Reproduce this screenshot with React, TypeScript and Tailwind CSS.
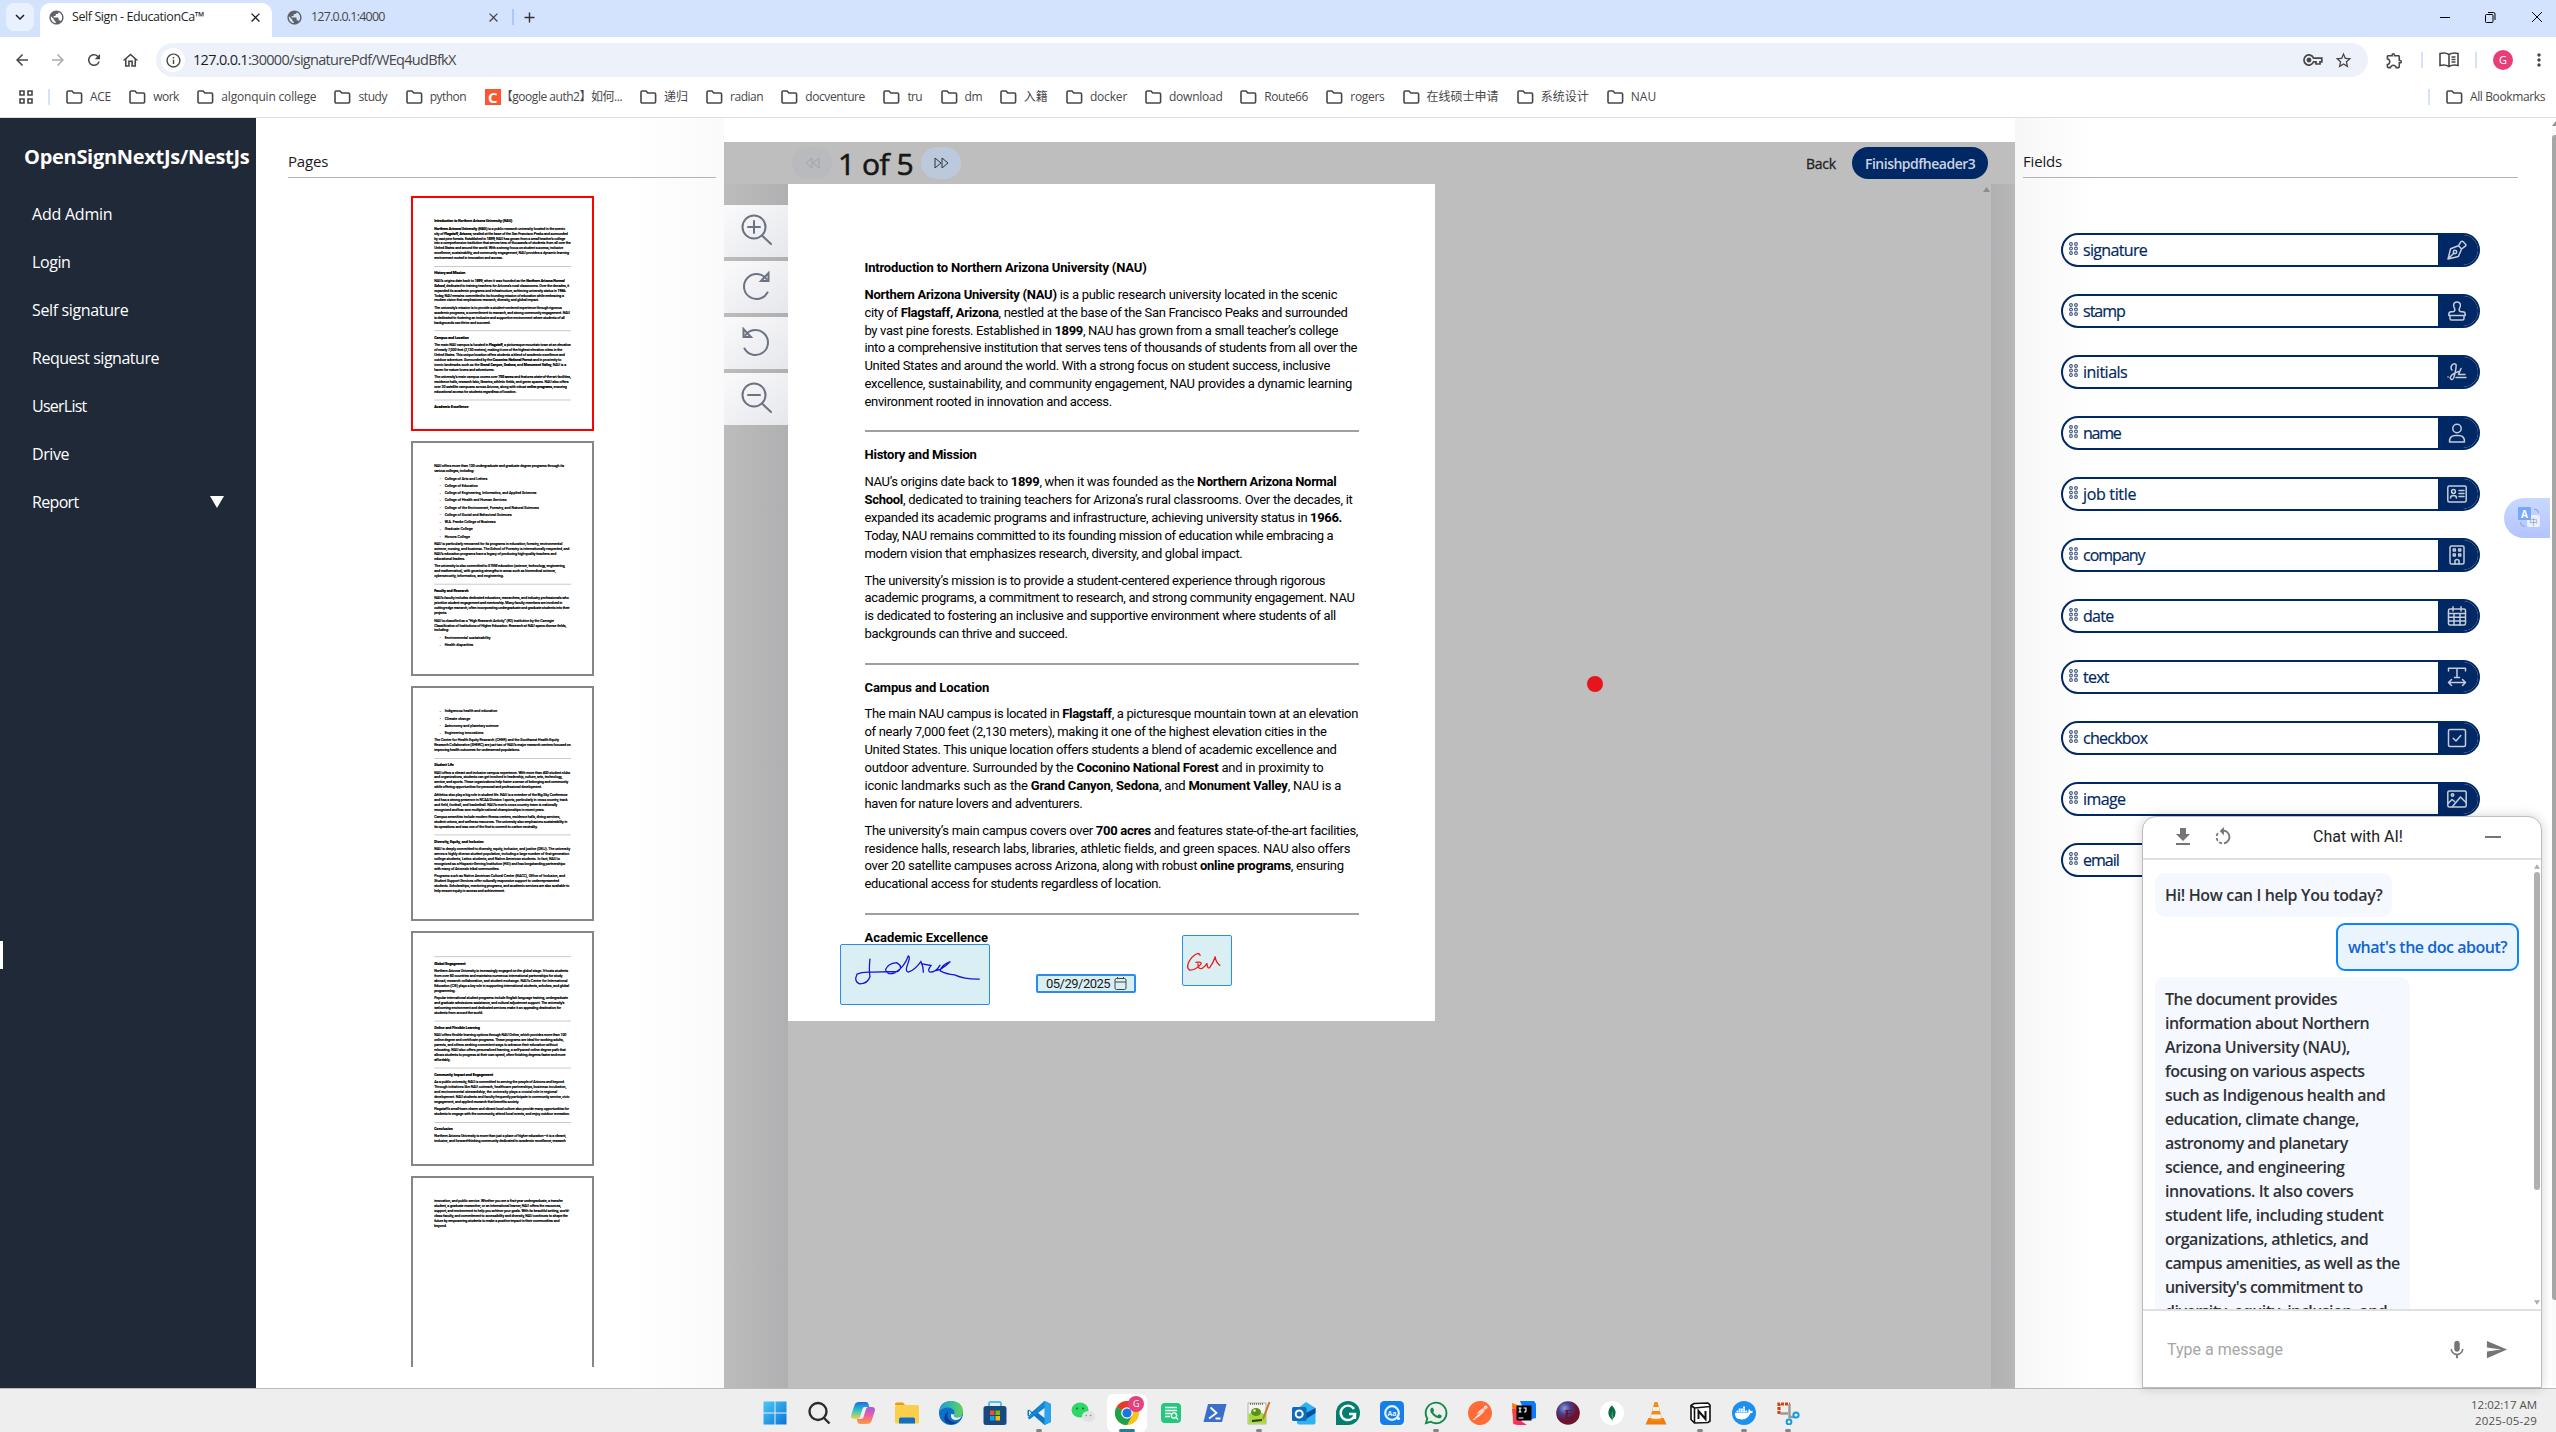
import { useLayoutEffect, useRef, type ReactNode } from "react";
import {
  MdArrowBack, MdArrowForward, MdRefresh, MdOutlineHome, MdInfoOutline, MdStarOutline,
  MdOutlineExtension, MdMoreVert, MdPublic, MdClose, MdAdd, MdKeyboardArrowDown,
  MdFileDownload, MdRotateLeft, MdMic, MdSend,
} from "react-icons/md";
import { SiPostman, SiMongodb, SiDocker } from "react-icons/si";
import { FaWhatsapp } from "react-icons/fa";

/* Single line of text whose tracking is adjusted so that it fills a given width. */
function Fit({ w, children, className = "" }: { w: number; children: ReactNode; className?: string }) {
  const ref = useRef<HTMLSpanElement>(null);
  useLayoutEffect(() => {
    const el = ref.current;
    if (!el) return;
    el.style.letterSpacing = "0px";
    const n = (el.textContent || "").length;
    if (n > 1) el.style.letterSpacing = `${(w - el.offsetWidth) / n}px`;
  }, [w]);
  return (
    <span className={`block shrink-0 whitespace-nowrap ${className}`} style={{ width: w }}>
      <span ref={ref} className="inline-block">{children}</span>
    </span>
  );
}

/* ---------- document content ---------- */
type Block = { k: "h" | "p" | "li"; l: [string, number][] } | { k: "hr" };
const HR: Block = { k: "hr" };
const h = (t: string, w: number): Block => ({ k: "h", l: [[t, w]] });
const li = (t: string, w: number): Block => ({ k: "li", l: [[t, w]] });
const p = (...l: [string, number][]): Block => ({ k: "p", l });

const PAGES: Block[][] = [
  [
    h("Introduction to Northern Arizona University (NAU)", 282.5),
    p(
      ["*Northern Arizona University (NAU)* is a public research university located in the scenic", 473],
      ["city of *Flagstaff, Arizona*, nestled at the base of the San Francisco Peaks and surrounded", 483],
      ["by vast pine forests. Established in *1899*, NAU has grown from a small teacher’s college", 473],
      ["into a comprehensive institution that serves tens of thousands of students from all over the", 493],
      ["United States and around the world. With a strong focus on student success, inclusive", 465.5],
      ["excellence, sustainability, and community engagement, NAU provides a dynamic learning", 487],
      ["environment rooted in innovation and access.", 247],
    ),
    HR,
    h("History and Mission", 112.5),
    p(
      ["NAU’s origins date back to *1899*, when it was founded as the *Northern Arizona Normal*", 472],
      ["*School*, dedicated to training teachers for Arizona’s rural classrooms. Over the decades, it", 488],
      ["expanded its academic programs and infrastructure, achieving university status in *1966.*", 478],
      ["Today, NAU remains committed to its founding mission of education while embracing a", 469],
      ["modern vision that emphasizes research, diversity, and global impact.", 378],
    ),
    p(
      ["The university’s mission is to provide a student-centered experience through rigorous", 460.5],
      ["academic programs, a commitment to research, and strong community engagement. NAU", 490],
      ["is dedicated to fostering an inclusive and supportive environment where students of all", 471],
      ["backgrounds can thrive and succeed.", 203.5],
    ),
    HR,
    h("Campus and Location", 125),
    p(
      ["The main NAU campus is located in *Flagstaff*, a picturesque mountain town at an elevation", 494],
      ["of nearly 7,000 feet (2,130 meters), making it one of the highest elevation cities in the", 461.5],
      ["United States. This unique location offers students a blend of academic excellence and", 472],
      ["outdoor adventure. Surrounded by the *Coconino National Forest* and in proximity to", 458.5],
      ["iconic landmarks such as the *Grand Canyon*, *Sedona*, and *Monument Valley*, NAU is a", 476.5],
      ["haven for nature lovers and adventurers.", 218],
    ),
    p(
      ["The university’s main campus covers over *700 acres* and features state-of-the-art facilities,", 493.5],
      ["residence halls, research labs, libraries, athletic fields, and green spaces. NAU also offers", 485.5],
      ["over 20 satellite campuses across Arizona, along with robust *online programs*, ensuring", 479],
      ["educational access for students regardless of location.", 296.5],
    ),
    HR,
    h("Academic Excellence", 123.5),
  ],
  [
    p(["NAU offers more than 130 undergraduate and graduate degree programs through its", 470], ["various colleges, including:", 144]),
    li("College of Arts and Letters", 154),
    li("College of Education", 119),
    li("College of Engineering, Informatics, and Applied Sciences", 332),
    li("College of Health and Human Services", 224),
    li("College of the Environment, Forestry, and Natural Sciences", 340),
    li("College of Social and Behavioral Sciences", 242),
    li("W.A. Franke College of Business", 184),
    li("Graduate College", 101),
    li("Honors College", 91),
    p(
      ["NAU is particularly renowned for its programs in education, forestry, environmental", 463],
      ["science, nursing, and business. The School of Forestry is internationally respected, and", 488],
      ["NAU’s education programs have a legacy of producing high-quality teachers and", 441],
      ["educational leaders.", 111],
    ),
    p(
      ["The university is also committed to STEM education (science, technology, engineering,", 473],
      ["and mathematics), with growing strengths in areas such as biomedical science,", 438],
      ["cybersecurity, informatics, and engineering.", 252],
    ),
    HR,
    h("Faculty and Research", 124),
    p(
      ["NAU’s faculty includes dedicated educators, researchers, and industry professionals who", 486],
      ["prioritize student engagement and mentorship. Many faculty members are involved in", 463],
      ["cutting-edge research, often incorporating undergraduate and graduate students into their", 489],
      ["projects.", 46],
    ),
    p(
      ["NAU is classified as a “High Research Activity” (R2) institution by the Carnegie", 433],
      ["Classification of Institutions of Higher Education. Research at NAU spans diverse fields,", 476],
      ["including:", 53],
    ),
    li("Environmental sustainability", 166),
    li("Health disparities", 103),
  ],
  [
    li("Indigenous health and education", 190),
    li("Climate change", 92),
    li("Astronomy and planetary science", 195),
    li("Engineering innovations", 140),
    p(
      ["The Center for Health Equity Research (CHER) and the Southwest Health Equity", 451],
      ["Research Collaborative (SHERC) are just two of NAU’s major research centers focused on", 494],
      ["improving health outcomes for underserved populations.", 310],
    ),
    HR,
    h("Student Life", 71),
    p(
      ["NAU offers a vibrant and inclusive campus experience. With more than 400 student clubs", 491],
      ["and organizations, students can get involved in leadership, culture, arts, technology,", 463],
      ["service, and sports. These organizations help foster a sense of belonging and community", 484],
      ["while offering opportunities for personal and professional development.", 389],
    ),
    p(
      ["Athletics also play a big role in student life. NAU is a member of the Big Sky Conference", 481],
      ["and has a strong presence in NCAA Division I sports, particularly in cross country, track", 482],
      ["and field, football, and basketball. NAU’s men’s cross country team is nationally", 445],
      ["recognized and has won multiple national championships in recent years.", 398],
    ),
    p(
      ["Campus amenities include modern fitness centers, residence halls, dining services,", 454],
      ["student unions, and wellness resources. The university also emphasizes sustainability in", 481],
      ["its operations and was one of the first to commit to carbon neutrality.", 373],
    ),
    HR,
    h("Diversity, Equity, and Inclusion", 179),
    p(
      ["NAU is deeply committed to diversity, equity, inclusion, and justice (DEIJ). The university", 491],
      ["serves a highly diverse student population, including a large number of first-generation", 487],
      ["college students, Latinx students, and Native American students. In fact, NAU is", 454],
      ["recognized as a Hispanic-Serving Institution (HSI) and has longstanding partnerships", 473],
      ["with many of Arizona’s tribal communities.", 236],
    ),
    p(
      ["Programs such as Native American Cultural Center (NACC), Office of Inclusion, and", 472],
      ["Student Support Services offer culturally responsive support to underrepresented", 451],
      ["students. Scholarships, mentoring programs, and academic services are also available to", 488],
      ["help ensure equity in access and achievement.", 255],
    ),
  ],
  [
    HR,
    h("Global Engagement", 113),
    p(
      ["Northern Arizona University is increasingly engaged on the global stage. It hosts students", 484],
      ["from over 80 countries and maintains numerous international partnerships for study", 463],
      ["abroad, research collaboration, and student exchange. NAU’s Center for International", 482],
      ["Education (CIE) plays a key role in supporting international students, scholars, and global", 488],
      ["programming.", 76],
    ),
    p(
      ["Popular international student programs include English language training, undergraduate", 483],
      ["and graduate admissions assistance, and cultural adjustment support. The university’s", 471],
      ["welcoming environment and dedicated services make it an appealing destination for", 458],
      ["students from around the world.", 176],
    ),
    HR,
    h("Online and Flexible Learning", 165),
    p(
      ["NAU offers flexible learning options through NAU Online, which provides more than 100", 477],
      ["online degree and certificate programs. These programs are ideal for working adults,", 467],
      ["parents, and others seeking convenient ways to advance their education without", 446],
      ["relocating. NAU also offers personalized learning, a self-paced online degree path that", 476],
      ["allows students to progress at their own speed, often finishing degrees faster and more", 473],
      ["affordably.", 59],
    ),
    HR,
    h("Community Impact and Engagement", 212),
    p(
      ["As a public university, NAU is committed to serving the people of Arizona and beyond.", 471],
      ["Through initiatives like NAU outreach, healthcare partnerships, business incubation,", 477],
      ["and environmental stewardship, the university plays a crucial role in regional", 445],
      ["development. NAU students and faculty frequently participate in community service, civic", 488],
      ["engagement, and applied research that benefits society.", 306],
    ),
    p(
      ["Flagstaff’s small-town charm and vibrant local culture also provide many opportunities for", 487],
      ["students to engage with the community, attend local events, and enjoy outdoor recreation.", 490],
    ),
    HR,
    h("Conclusion", 67),
    p(
      ["Northern Arizona University is more than just a place of higher education—it is a vibrant,", 476],
      ["inclusive, and forward-thinking community dedicated to academic excellence, research", 476],
    ),
  ],
  [
    p(
      ["innovation, and public service. Whether you are a first-year undergraduate, a transfer", 464],
      ["student, a graduate researcher, or an international learner, NAU offers the resources,", 458],
      ["support, and environment to help you achieve your goals. With its beautiful setting, world-", 488],
      ["class faculty, and commitment to accessibility and diversity, NAU continues to shape the", 482],
      ["future by empowering students to make a positive impact in their communities and", 452],
      ["beyond.", 46],
    ),
  ],
];

function rich(t: string) {
  return t.split("*").map((s, i) => (i % 2 ? <b key={i} className="font-bold">{s}</b> : s));
}

function DocPage({ blocks }: { blocks: Block[] }) {
  return (
    <div className="h-[837px] w-[647px] bg-white pl-[76.500px] pt-[75px] font-['Roboto',sans-serif] text-[13px] leading-[17.9px] text-black">
      {blocks.map((b, i) =>
        b.k === "hr" ? (
          <div key={i} className="mb-[14px] mt-[19.3px] h-[2px] w-[494px] bg-[#a0a0a0] first:mt-[10px]" />
        ) : (
          <div key={i} className={b.k === "h" ? "mb-[8.8px] font-bold" : b.k === "li" ? "mb-[8.3px] flex" : "mb-[9px]"}>
            {b.k === "li" && <span className="w-[38px] pl-[20px] text-[9px]">•</span>}
            {b.l.map(([t, w]) => <Fit key={t} w={w}>{rich(t)}</Fit>)}
          </div>
        ),
      )}
    </div>
  );
}

function Thumb({ blocks, active }: { blocks: Block[]; active?: boolean }) {
  return (
    <div className={`h-[235px] w-[183px] shrink-0 overflow-hidden border-2 ${active ? "border-[#fe0000]" : "border-[#868686]"}`}>
      <div className="h-[837px] w-[647px] origin-top-left scale-[0.2767] [-webkit-text-stroke:0.8px_black]">
        <DocPage blocks={blocks} />
      </div>
    </div>
  );
}

/* ---------- browser chrome ---------- */
const BOOKMARKS: [string, number][] = [
  ["ACE", 21], ["work", 26], ["algonquin college", 95], ["study", 29], ["python", 37], ["【google auth2】如何...", 121],
  ["递归", 24], ["radian", 33], ["docventure", 60], ["tru", 15], ["dm", 17], ["入籍", 24], ["docker", 37], ["download", 53],
  ["Route66", 44], ["rogers", 34], ["在线硕士申请", 72], ["系统设计", 48], ["NAU", 25],
];

function Folder() {
  return (
    <svg width="17" height="14" viewBox="0 0 17 14" className="shrink-0" fill="none" stroke="#474747" strokeWidth="1.6">
      <path d="M1 2.2Q1 1 2.2 1H6l1.8 2h6.6q1.2 0 1.2 1.2v7.6q0 1.2-1.2 1.2H2.2Q1 13 1 11.8Z" />
    </svg>
  );
}

function Browser() {
  return (
    <header className="flex h-[118px] shrink-0 flex-col border-b border-[#dfdfdf] bg-white text-[#1f1f1f]">
      <div className="flex h-[37px] bg-[#d3e3fd]">
        <div className="ml-[6px] mt-[3px] flex h-7 w-7 items-center justify-center rounded-lg bg-[#e9f1fe]"><MdKeyboardArrowDown size={18} /></div>
        <div className="ml-[6px] mt-[3px] flex h-[34px] w-[232px] items-center rounded-t-[10px] bg-white pb-[5px] pl-2">
          <MdPublic size={17} color="#5f6368" />
          <Fit w={132} className="ml-[7px] text-[12.5px]">Self Sign - EducationCa™</Fit>
          <MdClose size={15} className="ml-[44px] mr-auto" />
        </div>
        <div className="ml-[14px] mt-[3px] flex h-7 w-[226px] items-center">
          <MdPublic size={17} color="#5f6368" />
          <Fit w={74} className="ml-2 text-[12.5px] text-[#474747]">127.0.0.1:4000</Fit>
          <MdClose size={15} className="ml-[101px]" color="#474747" />
        </div>
        <div className="ml-0 mt-[9px] h-4 w-0.5 bg-[#a8c7fa]" />
        <MdAdd size={17} className="ml-[7px] mt-[9px]" color="#333" />
        <div className="ml-auto mr-[13px] flex h-[34px] items-center gap-[35px]">
          <div className="h-px w-[10px] bg-black" />
          <svg width="11" height="11" viewBox="0 0 11 11" fill="none" stroke="black"><rect x="0.5" y="2.5" width="7.5" height="8" rx="1" /><path d="M3 .5h5.500q1.500 0 1.500 1.500V8" /></svg>
          <svg width="12" height="12" viewBox="0 0 12 12" stroke="black"><path d="M1 1l10 10M11 1L1 11" /></svg>
        </div>
      </div>
      <div className="flex h-[46px] items-center pl-[13px] text-[#474747]">
        <MdArrowBack size={18} />
        <MdArrowForward size={18} className="ml-[18px] text-[#ababab]" />
        <MdRefresh size={18} className="ml-[18px]" />
        <MdOutlineHome size={19} className="ml-[18px]" />
        <div className="ml-4 flex h-[34px] w-[2212px] items-center rounded-full bg-[#edf1fa] pl-[5px] pr-[15px]">
          <div className="flex h-6 w-6 items-center justify-center rounded-full bg-white"><MdInfoOutline size={17} /></div>
          <Fit w={263} className="ml-[8px] text-[14.5px]"><span className="text-[#1f1f1f]">127.0.0.1</span>:30000/signaturePdf/WEq4udBfkX</Fit>
          <svg width="20" height="12" viewBox="0 0 20 12" className="ml-auto" fill="none" stroke="#474747" strokeWidth="1.7"><path d="M10.600 4.200A5 5 0 1 0 10.600 7.800H13V10H17V7.800H18.800V4.200Z" /><circle cx="6" cy="6" r="1.600" fill="#474747" /></svg>
          <MdStarOutline size={19} className="ml-[11px]" />
        </div>
        <MdOutlineExtension size={19} className="ml-[17px]" />
        <div className="ml-[17px] h-4 w-0.5 bg-[#d3e3fd]" />
        <svg width="20" height="16" viewBox="0 0 20 16" className="ml-[16px]" fill="none" stroke="#474747" strokeWidth="1.600"><path d="M10 2.500Q6 0 1 1.500v12Q6 12 10 14.500Q14 12 19 13.500v-12Q14 0 10 2.500V14.500M12.500 5h4M12.500 7.500h4M12.500 10h4" /></svg>
        <div className="ml-[16px] h-4 w-0.5 bg-[#d3e3fd]" />
        <div className="ml-[16px] flex h-5 w-5 items-center justify-center rounded-full bg-[#ea3d78] text-[11px] text-white">G</div>
        <MdMoreVert size={20} className="ml-[16px]" />
      </div>
      <div className="flex h-[28px] items-center pl-[19px] text-[12px] text-[#474747]">
        <svg width="14" height="14" viewBox="0 0 14 14" fill="none" stroke="#474747" strokeWidth="1.6"><path d="M1 1h4v4H1zM9 1h4v4H9zM1 9h4v4H1zM9 9h4v4H9z" /></svg>
        <div className="ml-[15px] mr-[16px] h-4 w-0.5 bg-[#d3e3fd]" />
        <div className="flex gap-[18.16px]">
          {BOOKMARKS.map(([t, w]) => (
            <div key={t} className="flex items-center gap-[7px]">
              {t.startsWith("【") ? (
                <div className="-mr-[7px] flex h-4 w-4 items-center justify-center bg-[#fc5531] text-[15px] font-bold text-white">C</div>
              ) : (
                <Folder />
              )}
              <Fit w={w}>{t}</Fit>
            </div>
          ))}
        </div>
        <div className="ml-auto mr-[16px] h-4 w-0.5 bg-[#d3e3fd]" />
        <Folder />
        <Fit w={75} className="ml-[7px] mr-[11px]">All Bookmarks</Fit>
      </div>
    </header>
  );
}

/* ---------- app panels ---------- */
const NAV: [string, number][] = [
  ["Add Admin", 80], ["Login", 39], ["Self signature", 96], ["Request signature", 127], ["UserList", 55], ["Drive", 37], ["Report", 47],
];

function Sidebar() {
  return (
    <nav className="relative flex w-64 shrink-0 flex-col bg-[#1f2937] pt-[25px] text-white">
      <Fit w={226} className="ml-6 text-[20px] font-bold leading-[28px]">OpenSignNextJs/NestJs</Fit>
      <div className="mt-[31px] flex flex-col gap-6 pl-8 pr-[32px] text-[16px] leading-6">
        {NAV.map(([t, w]) => (
          <div key={t} className="flex items-center justify-between">
            <Fit w={w}>{t}</Fit>
            {t === "Report" && <svg width="14" height="12" viewBox="0 0 14 12"><path d="M0 0h14L7 12z" fill="white" /></svg>}
          </div>
        ))}
      </div>
      <div className="absolute left-0 top-[823px] h-[28px] w-[3px] bg-white" />
    </nav>
  );
}

const stroke = { fill: "none", stroke: "#c8ccd8", strokeWidth: 1.5, strokeLinecap: "round", strokeLinejoin: "round" } as const;
const FIELDS: [string, number, ReactNode][] = [
  ["signature", 64, <g {...stroke}><path d="M1 19L3.600 8.800L11.400 5.800L14.600 9L11.400 16.400L1 19ZM1.500 18.500L7 13M11.400 5.800L13.800 1.800Q15 .6 16.200 1.800L18.400 4Q19.500 5.200 18.300 6.200L14.600 9" /><circle cx="8" cy="12" r="1.700" /></g>],
  ["stamp", 42, <g {...stroke}><path d="M1.800 14.500V13.400q0-2.600 2.600-2.600H6q2.600-.6 1.600-3.400Q6.600 6 6.600 4.300A3.400 3.400 0 0 1 13.400 4.300Q13.400 6 12.400 7.400q-1 2.800 1.600 3.400h1.600Q18.200 10.800 18.200 13.400v1.100ZM3 15.500v2q0 1.500 1.500 1.500h11q1.500 0 1.500-1.500v-2" /></g>],
  ["initials", 44, <g {...stroke}><path d="M1 15h.1M5 8Q3 6 5 3Q7 .8 9 2.500Q9.500 5 8 11Q7 17 5 17.500Q3 17.500 3.500 15Q5 11.500 12 9.500M14 6.500L11.500 12.500H18M9 15.500H19" /></g>],
  ["name", 38, <g {...stroke}><circle cx="10" cy="5.500" r="4.200" /><path d="M2.500 19q-.2-6.500 6-6.500h3q6.200 0 6 6.500Z" /></g>],
  ["job title", 53, <g {...stroke}><rect x="0.800" y="2" width="18.400" height="16" rx="1.500" /><circle cx="6.500" cy="7.500" r="1.900" /><path d="M3.500 14q0-2.500 3-2.500t3 2.500M12 6.500h5M12 9.500h5M12 12.500h5" /></g>],
  ["company", 62, <g {...stroke}><rect x="3" y="1" width="14" height="18" rx="1.500" /><path d="M6.300 4h2v2h-2zM11.700 4h2v2h-2zM6.300 9h2v2h-2zM11.700 9h2v2h-2zM8 19v-3.500q2-2 4 0V19" /></g>],
  ["date", 30, <g {...stroke}><rect x="1.500" y="3" width="17" height="16" rx="1.500" /><path d="M6 .8V5M14 .8V5M1.500 7.500h17M1.500 11.300h17M1.500 15h17M7 7.500V19M13 7.500V19" /></g>],
  ["text", 26, <g {...stroke}><path d="M1.500 4V1.200h17V4M10 1.200V10.500M7.500 10.500h5M1.500 15.500h17M4.500 12.500L1.500 15.500l3 3M15.500 12.500l3 3l-3 3" /></g>],
  ["checkbox", 64, <g {...stroke}><rect x="1.500" y="1.500" width="17" height="17" rx="1.500" /><path d="M6.200 10.200L9 13l4.800-5.500" /></g>],
  ["image", 42, <g {...stroke}><rect x="0.800" y="2" width="18.400" height="16" rx="1.500" /><circle cx="5.500" cy="6" r="1.200" /><path d="M1 14.500L5 10.500L7.500 12.500M5.500 17.500L13.500 8L19 13.500" /></g>],
  ["email", 36, <g {...stroke}><rect x="1" y="3" width="18" height="14" rx="1.500" /><path d="M1 5l9 7 9-7" /></g>],
];

function FieldPill({ label, w, icon }: { label: string; w: number; icon: ReactNode }) {
  return (
    <div className="flex h-[34px] w-[419px] shrink-0 overflow-hidden rounded-full border-2 border-[#002864] bg-white text-[#002864]">
      <div className="flex flex-1 items-center pl-[6px]">
        <svg width="9" height="13" viewBox="0 0 9 13" className="-mt-[3px]" fill="none" stroke="#3f5780" strokeWidth="1.100">
          {[2, 6.5, 11].map((y) => [2, 7].map((x) => <circle key={`${x}-${y}`} cx={x} cy={y} r="1.400" />))}
        </svg>
        <Fit w={w} className="ml-[5px] text-[16px] [-webkit-text-stroke:0.2px_#002864]">{label}</Fit>
      </div>
      <div className="flex w-[40px] items-center bg-[#002864]">
        <svg width="20" height="20" viewBox="0 0 20 20" className="ml-[9px]">{icon}</svg>
      </div>
    </div>
  );
}

function ToolBtn({ children }: { children: ReactNode }) {
  return (
    <div className="flex h-[52px] w-16 items-center justify-center bg-gradient-to-br from-[#fafafb] to-[#e6e7ec] pb-[3px]">
      <svg width="32" height="32" viewBox="0 0 32 32" fill="none" stroke="#6b7280" strokeWidth="2" strokeLinecap="round">{children}</svg>
    </div>
  );
}

function Viewer() {
  return (
    <section className="mt-[24px] flex w-[1291px] shrink-0 flex-col bg-[#bebebe]">
      <div className="flex h-[42px] items-center pl-[68px] pr-[27px]">
        <div className="flex h-8 w-10 items-center justify-center rounded-full bg-[#b9babd]">
          <svg width="15" height="12" viewBox="0 0 15 12" fill="none" stroke="#a2a4a9"><path d="M7 1L1 6l6 5zM14 1L8 6l6 5z" /></svg>
        </div>
        <Fit w={75} className="ml-[6px] mt-[2px] text-[30px] leading-8 text-[#161616] [-webkit-text-stroke:0.6px_#161616]">1 of 5</Fit>
        <div className="ml-[8px] flex h-8 w-10 items-center justify-center rounded-full bg-[#bcc9dc]">
          <svg width="15" height="12" viewBox="0 0 15 12" fill="none" stroke="#2b3440"><path d="M8 1l6 5-6 5zM1 1l6 5-6 5z" /></svg>
        </div>
        <Fit w={30} className="ml-auto text-[14px] text-[#222] [-webkit-text-stroke:0.3px_#222]">Back</Fit>
        <div className="ml-4 flex h-8 w-[136px] items-center justify-center rounded-full bg-[#002864]">
          <Fit w={110} className="text-[14px] font-semibold text-[#ccd3e0]">Finishpdfheader3</Fit>
        </div>
      </div>
      <div className="flex flex-1">
        <div className="flex w-16 flex-col gap-1 bg-gradient-to-r from-[#bcbcbc] to-[#b0b0b2] pt-[21px]">
          <ToolBtn><circle cx="14" cy="13" r="11.500" /><path d="M22 21.500L31 30M14 7v12M8 13h12" /></ToolBtn>
          <ToolBtn><path d="M27.500 22.500A12.500 12.500 0 1 1 26.500 9M28.500 3v8h-7.500z" /></ToolBtn>
          <ToolBtn><path d="M4.500 22.500A12.500 12.500 0 1 0 5.500 9M3.500 3v8h7.500z" /></ToolBtn>
          <ToolBtn><circle cx="14" cy="13" r="11.500" /><path d="M22 21.500L31 30M8 13h12" /></ToolBtn>
        </div>
        <div className="relative w-[1203px]">
          <DocPage blocks={PAGES[0]} />
          <div className="absolute left-[52px] top-[760px] h-[61px] w-[150px] rounded-[2px] border border-[#2d8ceb] bg-[#daeff3]">
            <svg width="148" height="59" viewBox="0 0 352 178" preserveAspectRatio="none" fill="none" stroke="#1616d8" strokeWidth="1.300">
              <path vectorEffect="non-scaling-stroke" d="M69 41Q66 75 69 95Q64 117 44 117Q30 110 38 88Q50 80 75 82L135 80Q150 66 132 53Q112 55 106 74Q108 92 128 84Q150 68 160 33Q166 34 158 60Q152 80 160 82Q175 76 190 50Q196 64 196 84M190 56Q206 60 214 62Q204 78 212 82Q226 82 236 60M222 78Q240 76 260 50Q238 60 236 78Q250 88 270 90Q294 104 330 103" />
            </svg>
          </div>
          <div className="absolute left-[248px] top-[790px] flex h-[19px] w-[100px] items-center rounded-[2px] border-2 border-[#2d8ceb] bg-[#daeff3] pl-2">
            <Fit w={64} className="font-['Roboto',sans-serif] text-[13px] leading-[15px] text-[#1a1a1a]">05/29/2025</Fit>
            <svg width="13" height="13" viewBox="0 0 13 13" className="ml-[4px]" fill="none" stroke="#444"><rect x="1" y="1.500" width="11" height="11" rx="1.500" /><path d="M1 5h11M3.500 0v2M9.500 0v2" /></svg>
          </div>
          <div className="absolute left-[394px] top-[751px] h-[51px] w-[50px] rounded-[2px] border border-[#2d8ceb] bg-[#daeff3]">
            <svg width="48" height="49" viewBox="0 0 116 148" preserveAspectRatio="none" fill="none" stroke="#ee1c1c" strokeWidth="1.300">
              <path vectorEffect="non-scaling-stroke" d="M42 60Q38 44 22 64Q4 92 16 103Q30 104 44 84Q44 76 30 80M36 82Q36 102 46 98Q56 90 58 82Q58 98 64 96Q74 80 78 62Q78 78 90 90" />
            </svg>
          </div>
          <div className="absolute left-[799px] top-[492px] h-4 w-4 rounded-full bg-[#e8141c]" />
          <svg width="7" height="5" viewBox="0 0 7 5" className="absolute left-[1195px] top-[3px]"><path d="M0 5h7L3.500 0z" fill="#8c8c8c" /></svg>
        </div>
        <div className="w-6 bg-gradient-to-r from-[#b0b0b2] to-[#b7b7b8]" />
      </div>
    </section>
  );
}

const REPLY: [string, number][] = [
  ["The document provides", 172], ["information about Northern", 204], ["Arizona University (NAU),", 185], ["focusing on various aspects", 200],
  ["such as Indigenous health and", 220], ["education, climate change,", 194], ["astronomy and planetary", 183], ["science, and engineering", 180],
  ["innovations. It also covers", 188], ["student life, including student", 218], ["organizations, athletics, and", 203],
  ["campus amenities, as well as the", 235], ["university's commitment to", 198], ["diversity, equity, inclusion, and", 222],
];

function Chat() {
  return (
    <div className="absolute left-[2142px] top-[816px] flex h-[572px] w-[400px] flex-col rounded-t-[14px] border border-[#bdbdbd] bg-white shadow-[0_0_12px_rgba(0,0,0,0.18)]">
      <div className="flex h-[43px] shrink-0 items-center border-b-2 border-[#e0e0e0] pb-px pl-[28px]">
        <MdFileDownload size={24} color="#757575" />
        <MdRotateLeft size={22} color="#757575" className="ml-[17px]" />
        <Fit w={90} className="ml-[79px] font-['Roboto',sans-serif] text-[16px] text-[#212121]">Chat with AI!</Fit>
        <div className="ml-[82px] h-0.5 w-4 bg-[#757575]" />
      </div>
      <div className="flex min-h-0 flex-1 overflow-hidden text-[16px] font-semibold leading-6 text-[#303235]">
        <div className="flex flex-1 flex-col gap-[6px] pl-3 pt-[13px]">
          <div className="w-[237px] rounded-[10px] bg-[#f5f8ff] p-[10px]"><Fit w={217}>Hi! How can I help You today?</Fit></div>
          <div className="mr-[13px] w-[183px] self-end rounded-[9px] border-2 border-[#0a84ff] bg-[#eaf4ff] p-[10px]"><Fit w={159} className="text-[#1164cf]">what's the doc about?</Fit></div>
          <div className="w-[255px] rounded-t-[10px] bg-[#f5f8ff] px-[10px] pt-[10px]">
            {REPLY.map(([t, w]) => <Fit key={t} w={w}>{t}</Fit>)}
          </div>
        </div>
        <div className="flex w-[9px] flex-col items-center py-1">
          <svg width="6" height="5" viewBox="0 0 7 5"><path d="M0 5h7L3.500 0z" fill="#acacac" /></svg>
          <div className="mt-[3px] h-[318px] w-[6px] rounded-full bg-[#b0b0b0]" />
          <svg width="6" height="5" viewBox="0 0 7 5" className="mt-auto"><path d="M0 0h7L3.500 5z" fill="#acacac" /></svg>
        </div>
      </div>
      <div className="flex h-[78px] shrink-0 items-center border-t-2 border-[#e0e0e0] pl-[24px] pt-px font-['Roboto',sans-serif] text-[16px] text-[#a6a6a6]">
        <Fit w={116}>Type a message</Fit>
        <MdMic size={22} color="#757575" className="ml-[163px]" />
        <MdSend size={23} color="#757575" className="ml-[17px]" />
      </div>
    </div>
  );
}

/* ---------- taskbar ---------- */
const GRID = { viewBox: "0 0 24 24", width: 24, height: 24 };
const TASKS: [string, ReactNode, boolean?][] = [
  ["start", <svg {...GRID}><defs><linearGradient id="w" x1="0" y1="0" x2="1" y2="1"><stop offset="0" stopColor="#4cc8fa" /><stop offset="1" stopColor="#0a74d4" /></linearGradient></defs><path d="M.5.500h11v11H.5zM12.500.5h11v11h-11zM.5 12.500h11v11H.5zM12.500 12.500h11v11h-11z" fill="url(#w)" /></svg>],
  ["search", <svg {...GRID} fill="none" stroke="#2b2b2b" strokeWidth="2.400"><circle cx="11" cy="10.500" r="8.500" /><path d="M17 17l5.500 5.500" /></svg>],
  ["copilot", <svg {...GRID}><defs><linearGradient id="cp1" x1="0" y1="0" x2="0" y2="1"><stop offset="0" stopColor="#1b6fe0" /><stop offset=".5" stopColor="#2ec3c9" /><stop offset="1" stopColor="#f6d43b" /></linearGradient><linearGradient id="cp2" x1="0" y1="0" x2="0" y2="1"><stop offset="0" stopColor="#a05be8" /><stop offset=".5" stopColor="#ee5f9c" /><stop offset="1" stopColor="#fb9d3c" /></linearGradient></defs><path d="M8 1h7q2 0 2.500 2l.8 3H14q-2 0-2.600 2L9 16q-.6 2-2.600 2H3q-4 0-2.500-5L3.500 4Q4.500 1 8 1Z" fill="url(#cp1)" /><path d="M16 23H9q-2 0-2.500-2L6 18h4q2 0 2.600-2L15 8q.6-2 2.600-2H21q4 0 2.500 5l-3 9Q19.500 23 16 23Z" fill="url(#cp2)" /></svg>],
  ["files", <svg {...GRID}><path d="M0 3q0-1.500 1.500-1.500H8l2 2.500H0z" fill="#e0a10c" /><rect y="4" width="24" height="18.500" rx="1.500" fill="#fccf4b" /><path d="M4 22.500V18q0-1.500 1.500-1.500h13Q20 16.500 20 18v4.500z" fill="#1170c4" /></svg>],
  ["edge", <svg {...GRID}><defs><linearGradient id="eg" x1="0" y1="0" x2="1" y2="0"><stop offset="0" stopColor="#1d9be0" /><stop offset="1" stopColor="#5bd65a" /></linearGradient></defs><circle cx="12" cy="12" r="12" fill="#0c6fc9" /><path d="M0 11Q1 0 12 0q11 0 12 10 0 6-6 6-4 0-3.500-2 1.500-1.500.8-4Q13 6.500 9 6.500 3 6.500 0 11Z" fill="url(#eg)" /><path d="M9 10q-3 8 5 11 5 1.500 8-2-5 5-12 4Q1 19 9 10Z" fill="#0b3f8f" /><path d="M15 13.500q-1 3 3 3 3-.2 5-2-2 4.500-6.500 4.500Q11 18.500 12 13Z" fill="#eee" /></svg>],
  ["store", <svg {...GRID}><path d="M6 6V2.500Q6 1 7.500 1h9Q18 1 18 2.500V6" fill="none" stroke="#4bc3f2" strokeWidth="2" /><rect y="5" x=".5" width="23" height="19" rx="2.500" fill="#174a80" /><path d="M7 9.500h4.500V14H7z" fill="#f25022" /><path d="M12.500 9.500H17V14h-4.500z" fill="#7fba00" /><path d="M7 15h4.500v4.500H7z" fill="#00a4ef" /><path d="M12.500 15H17v4.500h-4.500z" fill="#ffb900" /></svg>],
  ["code", <svg {...GRID}><path d="M17.500 0L24 3v18l-6.500 3L5 13 2 15.500.5 14.500v-5L2 8.500 5 11z" fill="#0b78c2" /><path d="M5 13L17.500 0v7L2.500 18.500.5 16.500z" fill="#1287d4" /><path d="M17.500 0L24 3v18l-6.500 3z" fill="#2aa4ec" /><path d="M17.500 7v10L11 12zM2 9.500v5L4.300 12z" fill="#eee" /></svg>, true],
  ["wechat", <svg {...GRID}><ellipse cx="9" cy="9" rx="8.500" ry="7.500" fill="#2bd966" /><circle cx="6" cy="7.500" r="1.100" fill="#0b7a33" /><circle cx="12" cy="7.500" r="1.100" fill="#0b7a33" /><ellipse cx="17.500" cy="15.500" rx="6.500" ry="5.500" fill="#e2e2e2" /><circle cx="15.300" cy="14.500" r=".8" fill="#888" /><circle cx="19.500" cy="14.500" r=".8" fill="#888" /></svg>],
  ["chrome", null],
  ["notes", <svg {...GRID}><rect x="2" y="2" width="20" height="20" rx="4" fill="#22c97c" /><g stroke="#fff" strokeWidth="1.400" fill="none"><path d="M6 6.500h12M6 9.500h12M6 12.500h6M6 15.500h5" /><circle cx="15" cy="14.500" r="2.600" /><path d="M17 16.500l2 2" /></g></svg>],
  ["powershell", <svg {...GRID}><path d="M5 3h18.500L19 21H.5z" fill="#3a6ecb" /><path d="M7.500 6.500L13.500 12 6 17.500M12.500 17.500h5" fill="none" stroke="#fff" strokeWidth="1.800" /></svg>],
  ["editor", <svg {...GRID}><path d="M1 2h18v21H1z" fill="#f4f4ee" stroke="#888" strokeWidth=".6" /><path d="M1.500 13Q10 8 19 14v8.500H1.500z" fill="#a6d93b" /><ellipse cx="9" cy="11" rx="5" ry="4" fill="#5d8f1c" /><circle cx="7.500" cy="9.500" r="1.300" fill="#e8f4c0" /><path d="M5 20l10-1" stroke="#2f3b14" strokeWidth="2" /><path d="M22.500 1L16 18" stroke="#c8772a" strokeWidth="2" /><path d="M3 3h14" stroke="#555" strokeWidth="1.500" strokeDasharray="1 1" /></svg>, true],
  ["outlook", <svg {...GRID}><path d="M5 8L14 1l9.500 6v14.500q0 2-2 2H7q-2 0-2-2z" fill="#2fb3ef" /><path d="M14 12l9.500-5v5L14 18z" fill="#0b4da2" /><rect y="6" width="14.500" height="14" rx="1.500" fill="#0f6cbd" /><circle cx="7.200" cy="13" r="3.500" fill="none" stroke="#fff" strokeWidth="2" /></svg>],
  ["grammarly", <div className="flex h-6 w-6 items-center justify-center rounded-full rounded-bl-[4px] bg-[#027e6f]"><svg {...GRID} fill="none" stroke="#fff" strokeWidth="2.400"><path d="M18 8A7.200 7.200 0 1 0 19 13H13M19 12.500V18" /></svg></div>],
  ["dictionary", <svg {...GRID}><rect width="24" height="24" rx="4.500" fill="#147fe8" /><circle cx="12" cy="12" r="6.800" fill="none" stroke="#e6f2ff" strokeWidth="2.200" /><circle cx="18.500" cy="17.500" r="1.600" fill="#e6f2ff" /><text x="12" y="14.500" fontSize="7" textAnchor="middle" fill="#e6f2ff" fontWeight="bold">Aa</text></svg>],
  ["whatsapp", <FaWhatsapp size={26} color="#138a4c" />, true],
  ["postman", <SiPostman size={24} color="#ff6c37" />],
  ["idea", <svg {...GRID}><path d="M0 2l8 3-3 19-4-2z" fill="#f97a12" /><path d="M8 0h14l2 3v14l-8 2z" fill="#0b7bfb" /><path d="M1 15L15 24H6L1.500 23z" fill="#fb2a6b" /><path d="M0 8h10v12l-8 2z" fill="#fb3c55" /><rect x="4.500" y="4.500" width="15" height="15" fill="#000" /><path d="M6.500 7h3M8 7v4M6.500 11h3M11.500 7h2.500v3q0 1-2 1M6.500 17h5" stroke="#fff" strokeWidth="1.200" fill="none" /></svg>],
  ["ide", <svg {...GRID}><defs><radialGradient id="ec" cx=".35" cy=".3"><stop offset="0" stopColor="#8f9ad8" /><stop offset=".5" stopColor="#45438f" /><stop offset="1" stopColor="#6b1430" /></radialGradient></defs><circle cx="12" cy="12" r="11.800" fill="url(#ec)" /><text x="13" y="17" fontSize="13" textAnchor="middle" fill="#6b1030" fontWeight="bold" fontFamily="Liberation Serif, serif">E</text></svg>],
  ["mongo", <div className="flex h-6 w-6 items-center justify-center rounded-full bg-white"><SiMongodb size={16} color="#0b6b45" /></div>],
  ["vlc", <svg {...GRID}><path d="M4.500 17h15l3 6.500h-21z" fill="#f07c0c" /><path d="M10.500 1h3l5 18q-6.500 3-13 0z" fill="#f58a14" /><path d="M9.200 6h5.600l1 4H8.200zM7.200 13.500h9.600l.9 3.500q-5.700 2-11.400 0z" fill="#f2f2f2" /></svg>],
  ["notion", <svg {...GRID}><path d="M3 4.500L6 2.500 20 2l2 2v16l-2 1.500L6.500 22 3 18.500z" fill="#fff" stroke="#111" strokeWidth="1.600" /><path d="M3 4.500L6.500 7v15M6.500 7L22 5.500" fill="none" stroke="#111" strokeWidth="1.600" /><path d="M10.500 18V10l7 8V10" fill="none" stroke="#111" strokeWidth="2" /></svg>, true],
  ["docker", <div className="flex h-6 w-6 items-center justify-center rounded-full bg-[#1d8fee]"><SiDocker size={18} color="#fff" /></div>, true],
  ["snip", <svg {...GRID} fill="none"><path d="M3 13V3H14" stroke="#d8400f" strokeWidth="3.200" strokeDasharray="3 1" /><path d="M13.500 3V16H19M4 12.500h8" stroke="#9a9a9a" strokeWidth="2.400" /><circle cx="20" cy="14" r="2.600" stroke="#149be0" strokeWidth="2" /><circle cx="13" cy="21" r="2.400" stroke="#149be0" strokeWidth="2" /></svg>, true],
];

function ChromeTile() {
  return (
    <div className="relative -mx-[8px] flex h-[38px] w-10 shrink-0 items-center justify-center rounded-md bg-white">
      <svg {...GRID} className="-mt-px">
        <circle cx="12" cy="12" r="12" fill="#fcc31e" />
        <path d="M12 12L1.600 6A12 12 0 0 1 22.400 6Z" fill="#e33b2e" />
        <path d="M12 12L1.600 6A12 12 0 0 0 12 24L17 15Z" fill="#1ea04c" />
        <circle cx="12" cy="12" r="5.800" fill="#fff" /><circle cx="12" cy="12" r="4.600" fill="#1a73e8" />
      </svg>
      <div className="absolute right-[3px] top-[2px] flex h-4 w-4 items-center justify-center rounded-full bg-[#e84079] text-[9px] text-white">G</div>
      <div className="absolute bottom-0 h-[3px] w-4 rounded-full bg-[#1f8294]" />
    </div>
  );
}

function Taskbar() {
  return (
    <footer className="flex h-[44px] shrink-0 justify-between border-t border-[#bcbcbc] bg-[#eeeeee] pl-[763px] pr-[19px]">
      <div className="flex gap-[20px] pt-[5px]">
        {TASKS.map(([k, icon, open]) =>
          k === "chrome" ? <ChromeTile key={k} /> : (
            <div key={k} className="relative flex h-[38px] w-[24.050px] shrink-0 items-center justify-center">
              {icon}
              {open && <div className="absolute bottom-0 h-[3px] w-[6px] rounded-full bg-[#858585]" />}
            </div>
          ),
        )}
      </div>
      <div className="flex flex-col items-end pt-[8px] text-[11.5px] leading-4 text-[#505050]">
        <Fit w={66}>12:02:17 AM</Fit>
        <Fit w={62}>2025-05-29</Fit>
      </div>
    </footer>
  );
}

export default function App() {
  return (
    <div className="relative flex h-[1432px] w-[2556px] flex-col overflow-hidden bg-white font-['Open_Sans','Noto_Sans_CJK_SC',sans-serif]">
      <Browser />
      <main className="flex min-h-0 flex-1">
        <Sidebar />
        <section className="flex w-[468px] shrink-0 flex-col bg-gradient-to-r from-white from-80% to-[#fafafa] pl-8 pr-2 pt-[24px]">
          <div className="border-b border-[#b4b4b4] pb-[4px] pt-[7px]"><Fit w={40} className="text-[15px] leading-6 text-[#1a1a1a]">Pages</Fit></div>
          <div className="mt-[18px] flex h-[1171px] flex-col items-center gap-[10px] overflow-hidden">
            {PAGES.map((b, i) => <Thumb key={i} blocks={b} active={i === 0} />)}
          </div>
        </section>
        <Viewer />
        <section className="flex flex-1 flex-col bg-gradient-to-r from-[#f7f7f8] via-white via-15% to-white pl-2 pr-[38px] pt-[24px]">
          <div className="border-b border-[#b4b4b4] pb-[4px] pt-[7px]"><Fit w={39} className="text-[15px] leading-6 text-[#1a1a1a]">Fields</Fit></div>
          <div className="flex flex-col gap-[27px] pl-[38px] pt-[55px]">
            {FIELDS.map(([t, w, icon]) => <FieldPill key={t} label={t} w={w} icon={icon} />)}
          </div>
        </section>
      </main>
      <Taskbar />
      <div className="absolute right-0 top-[121px] flex h-[1265px] w-[4px] flex-col justify-between bg-[#fafafa]">
        <svg width="4" height="5" viewBox="0 0 4 5"><path d="M0 5h4V0z" fill="#8f8f8f" /></svg>
        <div className="mb-[86px] h-[1165px] rounded-l-[3px] bg-[#a6a6a6]" />
      </div>
      <div className="absolute left-[2504px] top-[498px] flex h-10 w-[46px] items-center justify-center rounded-l-full bg-gradient-to-b from-[#c8d9ff] to-[#b5c3ff]">
        <svg width="23" height="22" viewBox="0 0 23 22" className="ml-[5px]">
          <rect x="9" y="8" width="13" height="12" rx="2" fill="#eaf0ff" /><rect width="13" height="13" rx="1" fill="#76a7fa" />
          <text x="6.500" y="10.500" fontSize="10" fontWeight="bold" textAnchor="middle" fill="#fff">A</text>
          <text x="15.500" y="18" fontSize="8" textAnchor="middle" fill="#8c94a6">中</text>
          <path d="M16 2q4 0 4.500 4M2 15q.5 4 5 4.500" fill="none" stroke="#8c9fc8" />
        </svg>
      </div>
      <Chat />
    </div>
  );
}
